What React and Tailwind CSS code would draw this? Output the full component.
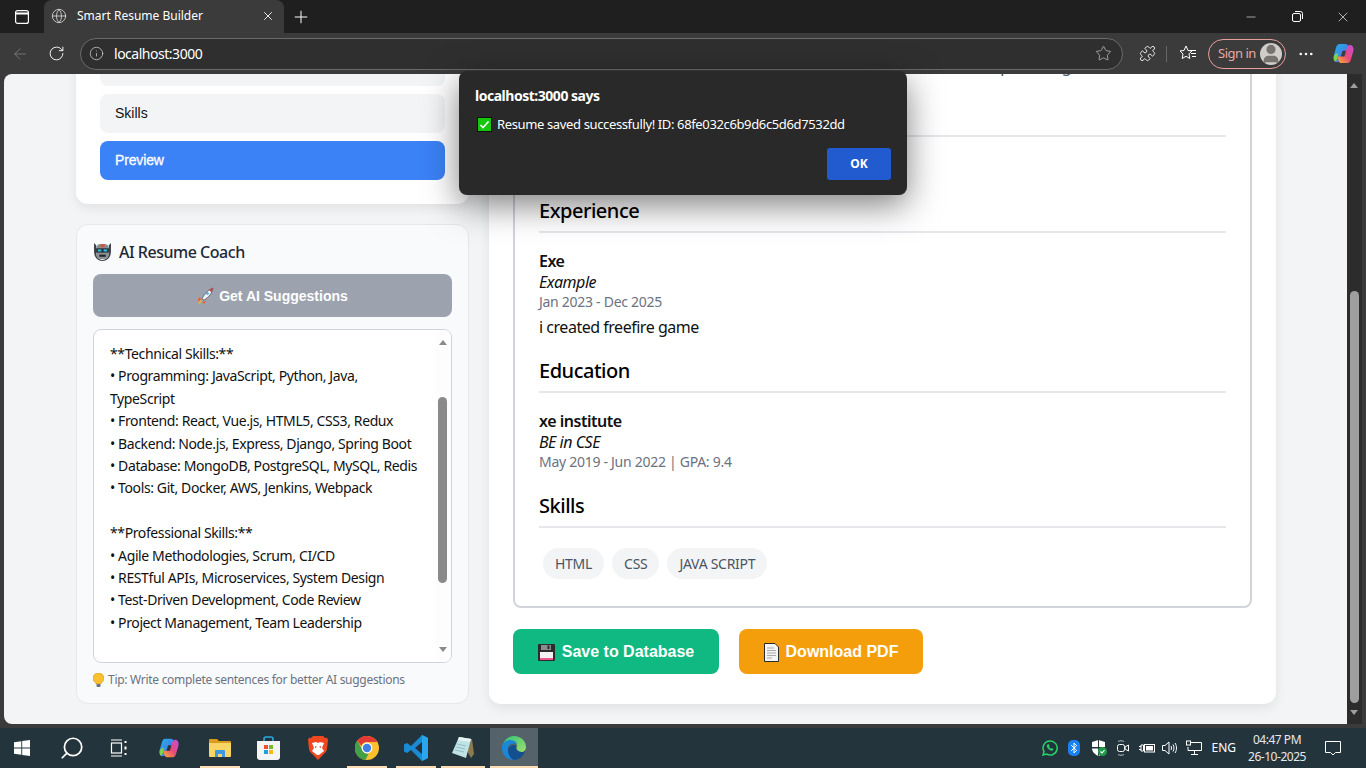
import React from 'react';
import { ArrowLeft, RotateCw, Info, Star, Puzzle, Plus, X, Minus, Globe, MoreHorizontal, Search, User } from 'lucide-react';

const coachLines = [
    '**Technical Skills:**',
    '• Programming: JavaScript, Python, Java, TypeScript',
    '• Frontend: React, Vue.js, HTML5, CSS3, Redux',
    '• Backend: Node.js, Express, Django, Spring Boot',
    '• Database: MongoDB, PostgreSQL, MySQL, Redis',
    '• Tools: Git, Docker, AWS, Jenkins, Webpack',
    '',
    '**Professional Skills:**',
    '• Agile Methodologies, Scrum, CI/CD',
    '• RESTful APIs, Microservices, System Design',
    '• Test-Driven Development, Code Review',
    '• Project Management, Team Leadership',
];

const CopilotLogo = ({ size = 22, id = 'a' }) => (
    <svg width={size} height={size} viewBox="0 0 24 24">
        <defs>
            <linearGradient id={`copA${id}`} x1="0" y1="0" x2="1" y2="1">
                <stop offset="0" stopColor="#1fb6e8" />
                <stop offset="1" stopColor="#5a5be6" />
            </linearGradient>
            <linearGradient id={`copB${id}`} x1="0" y1="1" x2="1" y2="0">
                <stop offset="0" stopColor="#f7b52c" />
                <stop offset="0.5" stopColor="#e8487d" />
                <stop offset="1" stopColor="#c04fe0" />
            </linearGradient>
        </defs>
        <path d="M8 2h6c1.5 0 2.4.8 2.9 2l1.6 5H11L8.5 18c-.4 1.5-1.4 3-3.2 3C3 21 1.5 19 1.5 16.5c0-1 .2-2 .5-3l2.2-7.5C4.8 3.6 6 2 8 2z" fill={`url(#copA${id})`} />
        <path d="M16 22h-6c-1.5 0-2.4-.8-2.9-2L5.5 15H13l2.5-9c.4-1.5 1.4-3 3.2-3 2.3 0 3.8 2 3.8 4.5 0 1-.2 2-.5 3l-2.2 7.5C19.2 20.4 18 22 16 22z" fill={`url(#copB${id})`} />
        <path d="M3 13c1-1 2.5-1 3.5-1L5.5 17c-.5 2-1.5 3.5-2.5 3.5C2 19 1.5 17 2 15z" fill="#7ed348" />
    </svg>
);

const WindowsLogo = () => (
    <svg width="16" height="16" viewBox="0 0 16 16" fill="#fff">
        <path d="M0 2.3 7.3 1.2v6.4H0zM8.2 1.1 16 0v7.6H8.2zM0 8.4h7.3v6.4L0 13.7zM8.2 8.4H16V16l-7.8-1.1z" />
    </svg>
);

const TaskViewIcon = () => (
    <svg width="18" height="18" viewBox="0 0 18 18" fill="none" stroke="#fff" strokeWidth="1.2">
        <path d="M1 1h11M1 17h11" />
        <rect x="1.5" y="4" width="10" height="10" />
        <path d="M15.5 2v2M15.5 7.5v3M15.5 14v2" strokeWidth="2" />
    </svg>
);

const ExplorerIcon = () => (
    <svg width="22" height="20" viewBox="0 0 22 20">
        <path d="M0 2a1 1 0 0 1 1-1h7l2 2h11a1 1 0 0 1 1 1v3H0z" fill="#d99e1c" />
        <path d="M0 5h22v13a1 1 0 0 1-1 1H1a1 1 0 0 1-1-1z" fill="#f9d566" />
        <path d="M6 19v-6a1 1 0 0 1 1-1h8a1 1 0 0 1 1 1v6h-3v-3H9v3z" fill="#3d9ae0" />
    </svg>
);

const StoreIcon = () => (
    <svg width="23" height="24" viewBox="0 0 23 24">
        <path d="M7 6V3a2 2 0 0 1 2-2h5a2 2 0 0 1 2 2v3" fill="none" stroke="#2aa6e0" strokeWidth="1.6" />
        <path d="M0 5h23v16a3 3 0 0 1-3 3H3a3 3 0 0 1-3-3z" fill="#f4f4f4" />
        <rect x="7" y="9" width="4" height="4" fill="#f0502c" />
        <rect x="12" y="9" width="4" height="4" fill="#7ab92d" />
        <rect x="7" y="14" width="4" height="4" fill="#1f9fe0" />
        <rect x="12" y="14" width="4" height="4" fill="#fcb713" />
    </svg>
);

const BraveIcon = () => (
    <svg width="20" height="24" viewBox="0 0 20 24">
        <path d="M5 0h10l2 2 2-.3 1 2-1 9c-.3 2.5-1.5 4-3.5 5.5L10 24l-5.5-5.8C2.5 16.7 1.3 15.2 1 13L0 3.7l1-2L3 2z" fill="#f1471f" />
        <path d="M4 7l4-1 2 1 2-1 4 1-2 5 2 3-5 4h-2l-5-4 2-3z" fill="#fff" />
        <path d="M7 10l2 1-2 1zM13 10l-2 1 2 1z" fill="#f1471f" />
    </svg>
);

const ChromeIcon = () => (
    <svg width="24" height="24" viewBox="0 0 24 24">
        <circle cx="12" cy="12" r="12" fill="#fbc02d" />
        <path d="M12 0a12 12 0 0 1 10.4 6H12a6 6 0 0 0-5.7 4.1L2.3 4.6A12 12 0 0 1 12 0z" fill="#e53935" />
        <path d="M2.3 4.6 6.9 13a6 6 0 0 0 6.7 4.8L10.4 24A12 12 0 0 1 2.3 4.6z" fill="#43a047" />
        <circle cx="12" cy="12" r="5.4" fill="#fff" />
        <circle cx="12" cy="12" r="4.2" fill="#3f7fe8" />
    </svg>
);

const VSCodeIcon = () => (
    <svg width="24" height="26" viewBox="0 0 24 26">
        <path d="M18 0 24 3v20l-6 3L7 15l-4 3-3-1.5v-7L3 8l4 3z" fill="#1a8ad4" />
        <path d="M18 0 24 3v20l-6 3z" fill="#2aa6ee" />
        <path d="M18 7l-7 6 7 6z" fill="#26303a" />
    </svg>
);

const NotepadIcon = () => (
    <svg width="24" height="24" viewBox="0 0 24 24">
        <path d="M8 1 21 3l2 15-3 4z" fill="#8c7a50" />
        <path d="M8 1 20 3 15 22 1 17z" fill="#bfe3e4" />
        <path d="M8 1 20 3l-1 3L7 4z" fill="#e8f4f4" />
        <path d="M6 8l9 2M5 11l9 2M4 14l9 2" stroke="#8cb4b8" strokeWidth="0.8" />
    </svg>
);

const EdgeIcon = ({ size = 24 }) => (
    <svg width={size} height={size} viewBox="0 0 24 24">
        <defs>
            <linearGradient id="edgeA" x1="0" y1="0" x2="1" y2="1">
                <stop offset="0" stopColor="#2fc37a" />
                <stop offset="1" stopColor="#9fe06a" />
            </linearGradient>
        </defs>
        <path d="M12 0c7 0 12 5 12 11 0 3-2 5-5 5-2 0-5-1-5-3 0-1 1-1 1-3 0-3-3-5-6-5-4 0-8 3-9 7C1 5 6 0 12 0z" fill="url(#edgeA)" />
        <path d="M0 12c0-5 4-8 8-8 3 0 6 1 7 4-2-1-8-1-9 4-1 5 3 10 9 11-1 1-2 1-3 1C5 24 0 19 0 12z" fill="#1a87d8" />
        <path d="M6 14c0-3 3-5 6-5 1 0 2 1 2 2 0 2 2 5 6 5 1 0 2 0 3-1-1 5-6 9-11 9-3-1-6-5-6-10z" fill="#14508f" />
    </svg>
);

const WhatsAppIcon = () => (
    <svg width="16" height="16" viewBox="0 0 16 16" fill="none">
        <path d="M8 1a7 7 0 0 0-6 10.5L1 15l3.6-1A7 7 0 1 0 8 1z" stroke="#25d366" strokeWidth="1.5" />
        <path d="M5.5 4.5c-1 1-.8 2.5.5 4s3 2.5 4.3 2c.8-.3 1.2-1 1-1.5L10 8l-1 .7C8 8.3 7.5 7.7 7 6.8l.7-.9-.9-1.600c-.5-.2-1 0-1.300.2z" fill="#25d366" />
    </svg>
);

const BluetoothIcon = () => (
    <svg width="12" height="16" viewBox="0 0 12 16">
        <rect width="12" height="16" rx="5" fill="#1a82f0" />
        <path d="M3.2 5.2 8.6 10.4 6 13V3l2.6 2.6L3.2 10.8" fill="none" stroke="#fff" strokeWidth="1" />
    </svg>
);

const ShieldIcon = () => (
    <svg width="16" height="16" viewBox="0 0 16 16">
        <path d="M7.5 0 14 2v6c0 4-3 6.5-6.5 8C4 14.5 1 12 1 8V2z" fill="#fff" />
        <path d="M7 0v7H1v1.5h6V15.500L8 16V8.500h6V7H8V0z" fill="#26343c" />
        <circle cx="11.5" cy="11.5" r="4.5" fill="#1e9c4c" />
        <path d="M9.5 11.5l1.5 1.5 2.5-2.8" fill="none" stroke="#fff" strokeWidth="1.1" />
    </svg>
);

const CameraIcon = () => (
    <svg width="12" height="16" viewBox="0 0 12 16" fill="none" stroke="#fff" strokeWidth="1">
        <rect x="0.5" y="4.5" width="7" height="7" rx="2" />
        <path d="M8 7l3.5-2v6L8 9z" />
        <path d="M1 1.5c2-1 4-1 6 0M1 14.5c2 1 4 1 6 0" stroke="#bbb" />
    </svg>
);

const BatteryIcon = () => (
    <svg width="16" height="12" viewBox="0 0 16 12" fill="none" stroke="#fff" strokeWidth="1">
        <rect x="5.5" y="2.5" width="10" height="7.5" />
        <rect x="7" y="4" width="7" height="4.5" fill="#fff" stroke="none" />
        <path d="M0 4.5h2M0 7.5h2M2 3h2.5v6H2zM4.5 6h1" />
    </svg>
);

const SpeakerIcon = () => (
    <svg width="16" height="16" viewBox="0 0 16 16" fill="none" stroke="#fff" strokeWidth="1">
        <path d="M.5 5.5H3L7 2v12L3 10.5H.5z" />
        <path d="M9 6c.7 1.2.7 2.8 0 4M11 4.5c1.3 2.2 1.3 4.8 0 7M13 3c2 3 2 7 0 10" />
    </svg>
);

const NetworkIcon = () => (
    <svg width="16" height="16" viewBox="0 0 16 16" fill="none" stroke="#fff" strokeWidth="1">
        <path d="M4 2.5h11.5v8H2V7" />
        <rect x="0.5" y="1" width="4" height="4" />
        <path d="M8.5 10.5V14M5 14.5h7" />
    </svg>
);

const RobotEmoji = () => (
    <svg width="19" height="19" viewBox="0 0 18 18">
        <path d="M1 1l2 2v7c0 4 2.5 7 6 7s6-3 6-7V3l2-2v8c0 5-3 9-8 9s-8-4-8-9z" fill="#3a3f45" />
        <rect x="3" y="2" width="12" height="14" rx="4" fill="#8a8f94" />
        <rect x="7" y="2" width="4" height="3" fill="#d0573c" />
        <rect x="3" y="6" width="12" height="4" fill="#22282e" />
        <rect x="4.5" y="7" width="3.5" height="2" fill="#27c4ea" />
        <rect x="10" y="7" width="3.5" height="2" fill="#27c4ea" />
        <rect x="6" y="12" width="6" height="2" fill="#22282e" />
    </svg>
);

const RocketEmoji = () => (
    <svg width="17" height="17" viewBox="0 0 17 17">
        <path d="M3 10 1 12l.5 2.5L4 13zM7 14l-2 2 2.5.5L9 14z" fill="#e8612c" />
        <path d="M5 12c0-1 4-7 7-9l4-2-1.5 4.5C13 9 8 12.5 7 13z" fill="#eef3f8" stroke="#333" strokeWidth="0.6" />
        <path d="M12 3l4-2-1.5 4.5z" fill="#e23b3b" />
        <circle cx="10.5" cy="6.5" r="1.3" fill="#3da0e8" />
        <path d="M1 16l3-3 1 1-3 3z" fill="#f5b52c" />
    </svg>
);

const FloppyEmoji = () => (
    <svg width="17" height="17" viewBox="0 0 17 17">
        <rect width="17" height="17" rx="1" fill="#2b2b2b" />
        <rect x="3" y="1" width="10" height="5" fill="#8d8d8d" />
        <rect x="9.5" y="1.5" width="2" height="3.5" fill="#2b2b2b" />
        <rect x="2" y="8" width="13" height="8" fill="#f2f2f2" />
        <rect x="2" y="14" width="13" height="2" fill="#e85a8c" />
    </svg>
);

const PageEmoji = () => (
    <svg width="15" height="19" viewBox="0 0 15 19">
        <path d="M.5.5H11L14.5 4v14.5H.5z" fill="#f4f4f4" stroke="#2b2b2b" />
        <path d="M3 5h7M3 7.5h9M3 10h9M3 12.5h9M3 15h5" stroke="#a8a8a8" />
    </svg>
);

const BulbEmoji = () => (
    <svg width="11" height="14" viewBox="0 0 11 14">
        <path d="M5.5 0A5.3 5.3 0 0 0 3 10v1h5v-1A5.3 5.3 0 0 0 5.5 0z" fill="#fbc02d" stroke="#b98a1a" strokeWidth="0.5" />
        <rect x="3.5" y="11" width="4" height="3" rx="1" fill="#6b7280" />
    </svg>
);

const CheckEmoji = () => (
    <svg width="15" height="15" viewBox="0 0 15 15">
        <rect x="0.5" y="0.5" width="14" height="14" fill="#16c60c" stroke="#111" />
        <path d="M3.5 8L6 10.5l5.5-6" fill="none" stroke="#fff" strokeWidth="1.6" />
    </svg>
);

const TaskSlot = ({ className, active, children }) => (
    <div className={`relative h-full flex items-center justify-center ${className}`}>
        {children}
        {active && <div className="absolute bottom-0 left-0 right-0 h-[2px] bg-[#fcdcb0]"></div>}
    </div>
);

const Heading = ({ children, className = '' }) => (
    <h2 className={`text-[20px] leading-[28px] font-medium text-black border-b-2 border-[#e5e7eb] pb-[6px] ${className}`}>{children}</h2>
);

const Entry = ({ title, sub, meta, desc }) => (
    <div className="mt-[18px]">
        <div className="text-base leading-[21px] font-semibold text-[#111]">{title}</div>
        <div className="text-base leading-[21px] italic text-[#111]">{sub}</div>
        <div className="-mt-px text-sm leading-[19px] tracking-[-0.02em] text-[#6b7280]">{meta}</div>
        {desc && <p className="mt-1 text-base leading-[24px] text-[#111]">{desc}</p>}
    </div>
);

const App = () => {
    return (
        <div className="relative w-[1366px] h-[768px] overflow-hidden flex flex-col bg-[#3b3b3b] font-['Noto_Sans',sans-serif] tracking-[-0.03em]">
            {/* Tab strip */}
            <div className="h-[33px] shrink-0 bg-[#1f1f1f] flex items-center text-white">
                <div className="w-[44px] flex justify-center">
                    <svg width="14" height="14" viewBox="0 0 14 14" fill="none" stroke="#fff" strokeWidth="1.2">
                        <rect x="0.6" y="0.6" width="12.8" height="12.8" rx="2" />
                        <path d="M0.6 3.5h12.8" strokeWidth="2" />
                    </svg>
                </div>
                <div className="w-[240px] h-full bg-[#3b3b3b] rounded-t-lg flex items-center pl-[7px] pr-[9px] pb-[2px]">
                    <Globe size={16} strokeWidth={1.2} className="text-[#ddd]" />
                    <span className="ml-[10px] text-xs tracking-normal flex-1">Smart Resume Builder</span>
                    <X size={14} strokeWidth={1.5} />
                </div>
                <Plus size={20} strokeWidth={1.2} className="ml-[7px]" />
                <div className="ml-auto flex items-center">
                    <div className="w-[46px] flex justify-center"><Minus size={14} strokeWidth={1} /></div>
                    <div className="w-[46px] flex justify-center">
                        <svg width="11" height="11" viewBox="0 0 11 11" fill="none" stroke="#fff" strokeWidth="1">
                            <rect x="0.5" y="2.5" width="8" height="8" rx="1.5" />
                            <path d="M3 .5h5.5a2 2 0 0 1 2 2V8" />
                        </svg>
                    </div>
                    <div className="w-[46px] flex justify-center"><X size={16} strokeWidth={1} /></div>
                </div>
            </div>

            {/* Toolbar */}
            <div className="h-[41px] shrink-0 flex items-center text-white">
                <div className="w-[40px] flex justify-center"><ArrowLeft size={18} strokeWidth={1.2} className="text-[#7c7c7c]" /></div>
                <div className="w-[32px] flex justify-center"><RotateCw size={17} strokeWidth={1.3} /></div>
                <div className="ml-[8px] w-[1043px] h-[32px] rounded-full bg-[#2f2f2f] border border-[#6a6a6a] flex items-center pl-[8px] pr-[10px]">
                    <Info size={15} strokeWidth={1.2} className="text-[#d0d0d0]" />
                    <span className="ml-[10px] text-sm flex-1">localhost:3000</span>
                    <Star size={17} strokeWidth={1.1} className="text-[#bdbdbd]" />
                </div>
                <div className="ml-[15px] w-[18px] flex justify-center"><Puzzle size={17} strokeWidth={1.2} /></div>
                <div className="ml-[10px] w-px h-[16px] bg-[#666]"></div>
                <svg className="ml-[12px]" width="18" height="17" viewBox="0 0 18 17" fill="none" stroke="#fff" strokeWidth="1">
                    <path d="M7 1l2 4.5 4 .4-3 3 .8 4.6L7 11.3l-3.8 2.2L4 9 1 5.9l4-.4zM12 8.5h5M13 11.500h4M11 5.500h6" />
                </svg>
                <div className="ml-[11px] w-[78px] h-[30px] rounded-full border border-[#e8a09a] flex items-center justify-between pl-[9px] pr-[3px]">
                    <span className="text-[13px] text-[#eba9a3]">Sign in</span>
                    <div className="size-[22px] rounded-full bg-[#cfcdc9] overflow-hidden flex items-center justify-center">
                        <User size={22} fill="#77736e" stroke="#77736e" />
                    </div>
                </div>
                <div className="ml-[9px] w-[22px] flex justify-center"><MoreHorizontal size={18} strokeWidth={1.5} /></div>
                <div className="ml-[15px]"><CopilotLogo size={23} id="bar" /></div>
            </div>

            {/* Page */}
            <div className="flex-1 min-h-0 flex pl-1 pr-1 pb-1">
                <div className="flex-1 min-w-0 bg-[#f3f4f6] rounded-l-lg overflow-hidden flex flex-col justify-end pb-5">
                    <div className="w-[1200px] ml-[72px] shrink-0 flex gap-5 items-stretch">
                        {/* Sidebar */}
                        <div className="w-[393px] shrink-0 flex flex-col justify-end gap-5">
                            <div className="bg-white rounded-xl shadow-[0_4px_12px_rgba(0,0,0,0.08)] p-6 flex flex-col gap-2 font-['Liberation_Sans',sans-serif] tracking-normal text-sm">
                                <div className="h-[39px] rounded-lg bg-[#f3f4f6]"></div>
                                <div className="h-[39px] rounded-lg bg-[#f3f4f6] px-[15px] pb-[2px] flex items-center text-[#111]">Skills</div>
                                <div className="h-[39px] rounded-lg bg-[#3b82f6] px-[15px] pb-[2px] flex items-center font-medium tracking-[-0.01em] [-webkit-text-stroke:0.3px_white] text-white">Preview</div>
                            </div>
                            <div className="h-[480px] bg-[#f9fafb] border border-[#e5e7eb] rounded-xl p-4 flex flex-col">
                                <div className="flex items-center gap-[7px] h-[25px] shrink-0 -mt-[2px] text-[#1f2937] text-base font-medium">
                                    <RobotEmoji />
                                    <span>AI Resume Coach</span>
                                </div>
                                <button className="mt-[10px] h-[43px] shrink-0 rounded-lg bg-[#9ca3af] flex items-center justify-center gap-[5px] text-white text-sm font-bold font-['Liberation_Sans',sans-serif] tracking-normal">
                                    <RocketEmoji />
                                    Get AI Suggestions
                                </button>
                                <div className="relative mt-[12px] h-[334px] shrink-0 bg-white border border-[#d1d5db] rounded-lg overflow-hidden pl-4 pr-[30px] pt-[13px] text-sm leading-[22.4px] tracking-[-0.028em] text-[#111]">
                                    {coachLines.map((line, i) => (
                                        <div key={i} className="min-h-[22.4px]">{line}</div>
                                    ))}
                                    {/* inner scrollbar */}
                                    <div className="absolute top-0 right-0 bottom-0 w-[16px] bg-[#fdfdfd]">
                                        <div className="absolute top-[10px] left-[4px] w-0 h-0 border-x-[4px] border-x-transparent border-b-[5px] border-b-[#8a8a8a]"></div>
                                        <div className="absolute top-[67px] left-[3px] w-[9px] h-[186px] rounded-full bg-[#8a8a8a]"></div>
                                        <div className="absolute bottom-[10px] left-[4px] w-0 h-0 border-x-[4px] border-x-transparent border-t-[5px] border-t-[#8a8a8a]"></div>
                                    </div>
                                </div>
                                <div className="mt-[9px] flex items-center gap-[4px] text-xs leading-[16px] tracking-[-0.024em] text-[#6b7280]">
                                    <BulbEmoji />
                                    <span>Tip: Write complete sentences for better AI suggestions</span>
                                </div>
                            </div>
                        </div>

                        {/* Resume preview */}
                        <div className="w-[787px] shrink-0 bg-white rounded-xl shadow-[0_4px_12px_rgba(0,0,0,0.08)] px-6 pb-[30px] flex flex-col justify-end">
                            <div className="border-2 border-[#d1d5db] rounded-lg px-6 pb-[27px] text-[#111]">
                                {/* only the descenders of this line show under the browser toolbar */}
                                <div className="flex justify-end gap-[52px] pr-[155px] text-base leading-[24px] text-[#4b5563]">
                                    <span>p</span>
                                    <span>g</span>
                                </div>
                                {/* section heading sits behind the alert, only its rule shows */}
                                <div className="mt-[23px] h-[36px] border-b-2 border-[#e5e7eb]"></div>
                                <div className="h-[60px]"></div>
                                <Heading>Experience</Heading>
                                <Entry title="Exe" sub="Example" meta="Jan 2023 - Dec 2025" desc="i created freefire game" />
                                <Heading className="mt-[18px]">Education</Heading>
                                <Entry title="xe institute" sub="BE in CSE" meta="May 2019 - Jun 2022 | GPA: 9.4" />
                                <Heading className="mt-[21px]">Skills</Heading>
                                <div className="mt-[20px] flex gap-2 pl-1 text-sm tracking-[-0.02em]">
                                    {['HTML', 'CSS', 'JAVA SCRIPT'].map((skill) => (
                                        <span key={skill} className="h-[31px] px-3 rounded-full bg-[#f3f4f6] text-[#4b5563] flex items-center">{skill}</span>
                                    ))}
                                </div>
                            </div>
                            <div className="mt-[21px] flex gap-5 text-white text-base font-bold font-['Liberation_Sans',sans-serif] tracking-normal">
                                <button className="w-[206px] h-[45px] pt-px rounded-lg bg-[#10b981] flex items-center justify-center gap-[7px]">
                                    <FloppyEmoji />
                                    Save to Database
                                </button>
                                <button className="w-[184px] h-[45px] pt-px rounded-lg bg-[#f59e0b] flex items-center justify-center gap-[7px]">
                                    <PageEmoji />
                                    Download PDF
                                </button>
                            </div>
                        </div>
                    </div>
                </div>

                {/* Browser scrollbar */}
                <div className="relative w-[15px] shrink-0 bg-[#2c2c2c]">
                    <div className="absolute top-[9px] left-[3px] w-0 h-0 border-x-[4.5px] border-x-transparent border-b-[5px] border-b-[#9e9e9e]"></div>
                    <div className="absolute top-[217px] left-[3px] w-[9px] h-[412px] rounded-full bg-[#9e9e9e]"></div>
                    <div className="absolute bottom-[9px] left-[3px] w-0 h-0 border-x-[4.5px] border-x-transparent border-t-[5px] border-t-[#9e9e9e]"></div>
                </div>
            </div>

            {/* Taskbar */}
            <div className="h-10 shrink-0 bg-[#24343d] flex items-center text-white">
                <TaskSlot className="w-[44px]"><WindowsLogo /></TaskSlot>
                <TaskSlot className="w-[56px]"><Search size={26} strokeWidth={1.6} className="-scale-x-100" /></TaskSlot>
                <TaskSlot className="w-[38px]"><TaskViewIcon /></TaskSlot>
                <TaskSlot className="w-[62px]"><CopilotLogo size={22} id="task" /></TaskSlot>
                <TaskSlot className="w-[40px]" active><ExplorerIcon /></TaskSlot>
                <TaskSlot className="w-[56px]"><StoreIcon /></TaskSlot>
                <TaskSlot className="w-[44px]"><BraveIcon /></TaskSlot>
                <TaskSlot className="ml-[7px] w-[40px]" active><ChromeIcon /></TaskSlot>
                <TaskSlot className="ml-[9px] w-[40px]" active><VSCodeIcon /></TaskSlot>
                <TaskSlot className="ml-[5px] w-[44px]" active><NotepadIcon /></TaskSlot>
                <TaskSlot className="ml-[5px] w-[48px] bg-[#55626a]" active><EdgeIcon /></TaskSlot>

                <div className="ml-auto flex items-center h-full">
                    <div className="w-[24px] flex justify-center"><WhatsAppIcon /></div>
                    <div className="w-[24px] flex justify-center"><BluetoothIcon /></div>
                    <div className="w-[25px] flex justify-center"><ShieldIcon /></div>
                    <div className="w-[24px] flex justify-center"><CameraIcon /></div>
                    <div className="w-[23px] flex justify-center"><BatteryIcon /></div>
                    <div className="w-[24px] flex justify-center"><SpeakerIcon /></div>
                    <div className="w-[24px] flex justify-center"><NetworkIcon /></div>
                    <span className="ml-[5px] text-xs tracking-normal">ENG</span>
                    <div className="ml-[9px] w-[64px] text-center text-xs leading-[17px] whitespace-nowrap text-[#e8e8e8]">
                        <div>04:47 PM</div>
                        <div>26-10-2025</div>
                    </div>
                    <div className="ml-[16px] mr-[25px]">
                        <svg width="16" height="15" viewBox="0 0 16 15" fill="none" stroke="#fff" strokeWidth="1">
                            <path d="M.5.5h15v11h-5L8 14l-2.5-2.5h-5z" />
                        </svg>
                    </div>
                </div>
            </div>

            {/* JS alert dialog */}
            <div className="absolute left-[459px] top-[71px] w-[448px] h-[124px] bg-[#292929] rounded-lg shadow-[0_10px_34px_rgba(0,0,0,0.5)] px-4 pt-[16px] text-white">
                <div className="text-sm leading-[18px] font-bold">localhost:3000 says</div>
                <div className="mt-[10px] flex items-center gap-[5px] pl-[2px] text-[13px] leading-[18px] tracking-[-0.028em]">
                    <CheckEmoji />
                    <span>Resume saved successfully! ID: 68fe032c6b9d6c5d6d7532dd</span>
                </div>
                <div className="mt-[15px] flex justify-end">
                    <button className="w-[64px] h-[32px] rounded-[3px] bg-[#225bd0] text-xs tracking-normal font-bold text-white">OK</button>
                </div>
            </div>
        </div>
    );
};

export default App;
